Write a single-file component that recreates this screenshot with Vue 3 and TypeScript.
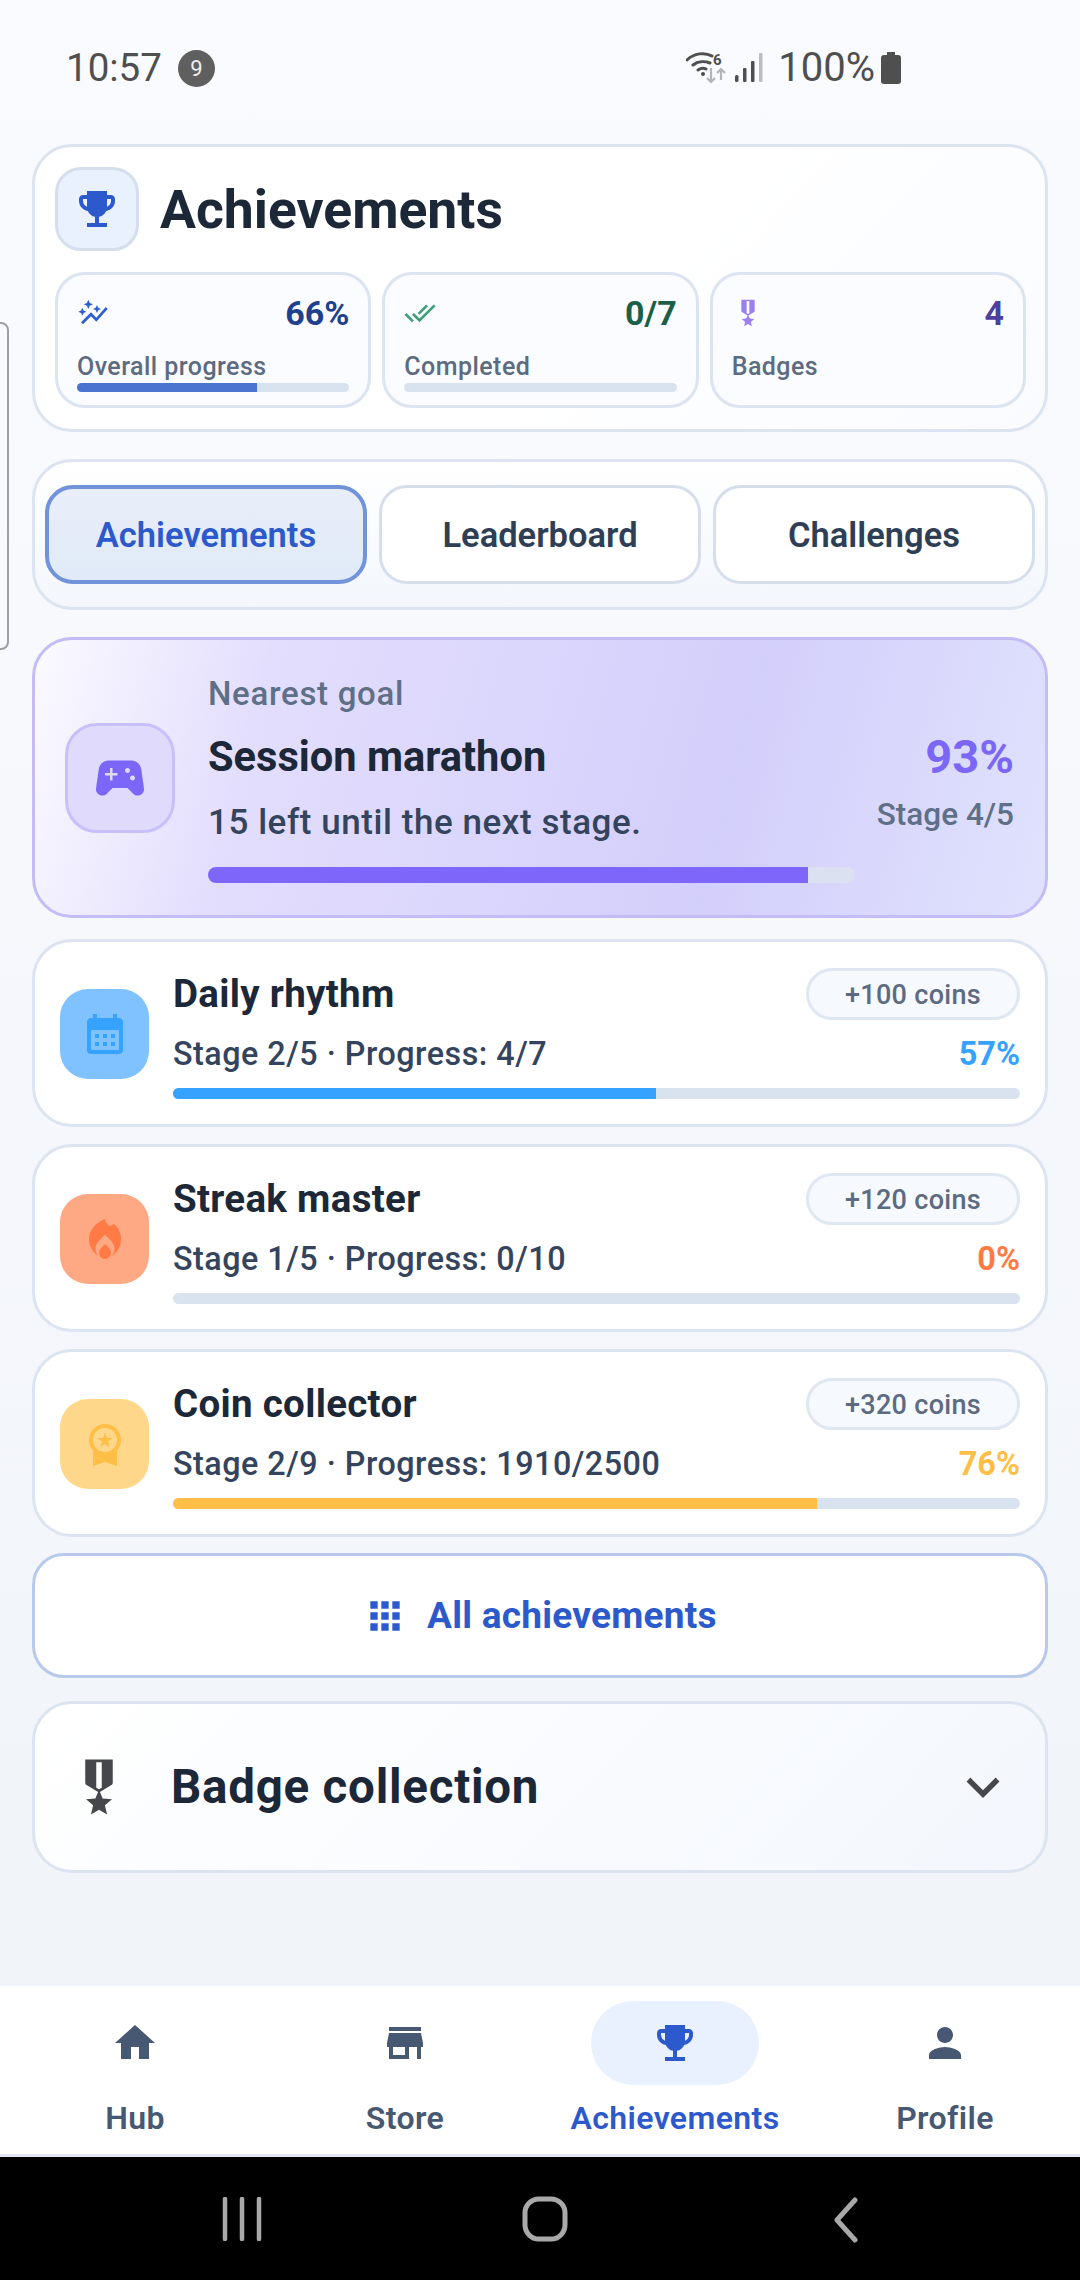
<script setup lang="ts">
const P = {
  trophy: 'M19 5h-2V3H7v2H5c-1.1 0-2 .9-2 2v1c0 2.55 1.92 4.63 4.39 4.94.63 1.5 1.98 2.63 3.61 2.96V19H7v2h10v-2h-4v-3.1c1.63-.33 2.98-1.46 3.61-2.96C19.08 12.63 21 10.55 21 8V7c0-1.1-.9-2-2-2zM5 8V7h2v3.82C5.84 10.4 5 9.3 5 8zm14 0c0 1.3-.84 2.4-2 2.82V7h2v1z',
  graph: 'M14.06 9.94 12 9l2.06-.94L15 6l.94 2.06L18 9l-2.06.94L15 12zM4 14l.94-2.06L7 11l-2.06-.94L4 8l-.94 2.06L1 11l2.06.94zm4.5-5 1.09-2.41L12 5.5 9.59 4.41 8.5 2 7.41 4.41 5 5.5l2.41 1.09zm-4 11.5 6-6.01 4 4L23 8.93l-1.41-1.41-7.09 7.97-4-4L3 19z',
  done: 'M18 7l-1.41-1.41-6.34 6.34 1.41 1.41L18 7zm4.24-1.41L11.66 16.17 7.48 12l-1.41 1.41L11.66 19l12-12-1.42-1.41zM.41 13.41L6 19l1.41-1.41L1.83 12 .41 13.41z',
  medal: 'M17 10.43V2H7v8.43c0 .35.18.68.49.86l4.18 2.51-.99 2.34-3.41.29 2.59 2.24L9.07 22 12 20.23 14.93 22l-.78-3.33 2.59-2.24-3.41-.29-.99-2.34 4.18-2.51c.3-.18.48-.5.48-.86zm-4 1.8-1 .6-1-.6V3h2v9.23z',
  pad: 'M21.58 16.09l-1.09-7.66C20.21 6.46 18.52 5 16.53 5H7.47C5.48 5 3.79 6.46 3.51 8.43l-1.09 7.66C2.2 17.63 3.39 19 4.94 19c.68 0 1.32-.27 1.8-.75L9 16h6l2.25 2.25c.48.48 1.13.75 1.8.75 1.56 0 2.75-1.37 2.53-2.91zM11 11H9v2H8v-2H6v-1h2V8h1v2h2v1zm4-1c-.55 0-1-.45-1-1s.45-1 1-1 1 .45 1 1-.45 1-1 1zm2 3c-.55 0-1-.45-1-1s.45-1 1-1 1 .45 1 1-.45 1-1 1z',
  calendar: 'M19 4h-1V2h-2v2H8V2H6v2H5c-1.11 0-1.99.9-1.99 2L3 20a2 2 0 0 0 2 2h14c1.1 0 2-.9 2-2V6c0-1.1-.9-2-2-2zm0 16H5V10h14v10zM9 14H7v-2h2v2zm4 0h-2v-2h2v2zm4 0h-2v-2h2v2zm-8 4H7v-2h2v2zm4 0h-2v-2h2v2zm4 0h-2v-2h2v2z',
  fire: 'M12 2c.4 2.2 1.5 3.2 2.6 3.4.7.1 1.3-.3 1.6-1 2.3 1.6 3.8 4.5 3.8 7.6 0 3.6-1.9 6.8-4.8 8.6 1-1.1 1.6-2.4 1.6-3.8 0-2.6-2.3-4.3-4.8-7-2.5 2.7-4.8 4.4-4.8 7 0 1.4.6 2.7 1.6 3.8C5.9 18.800 4 15.600 4 12c0-4.400 3.500-8.200 8-10zM12 14.500c1.700 1.800 3 2.800 3 4.300 0 1.700-1.300 3.200-3 3.200s-3-1.500-3-3.200c0-1.500 1.300-2.500 3-4.300z',
  award: 'M9.68 13.69 12 11.93l2.31 1.76-.88-2.85L15.75 9h-2.84L12 6.19 11.09 9H8.25l2.31 1.84-.88 2.85zM20 10c0-4.42-3.58-8-8-8s-8 3.58-8 8c0 2.03.76 3.87 2 5.28V23l6-2 6 2v-7.72c1.24-1.41 2-3.25 2-5.28zm-8-6c3.31 0 6 2.69 6 6s-2.69 6-6 6-6-2.69-6-6 2.69-6 6-6z',
  apps: 'M4 8h4V4H4v4zm6 12h4v-4h-4v4zm-6 0h4v-4H4v4zm0-6h4v-4H4v4zm6 0h4v-4h-4v4zm6-10v4h4V4h-4zm-6 4h4V4h-4v4zm6 6h4v-4h-4v4zm0 6h4v-4h-4v4z',
  chevron: 'M16.59 8.59 12 13.17 7.41 8.59 6 10l6 6 6-6z',
  home: 'M10 20v-6h4v6h5v-8h3L12 3 2 12h3v8z',
  store: 'M20 4H4v2h16V4zm1 10v-2l-1-5H4l-1 5v2h1v6h10v-6h4v6h2v-6h1zm-9 4H6v-4h6v4z',
  person: 'M12 12c2.21 0 4-1.79 4-4s-1.79-4-4-4-4 1.79-4 4 1.79 4 4 4zm0 2c-2.67 0-8 1.34-8 4v2h16v-2c0-2.66-5.33-4-8-4z',
}

const stats = [
  { icon: P.graph, iconColor: '#2f5fcf', value: '66%', valueColor: '#1f3f8f', label: 'Overall progress', fill: 66, fillColor: '#4a74d0', bar: true },
  { icon: P.done, iconColor: '#3f9f78', value: '0/7', valueColor: '#1c5f48', label: 'Completed', fill: 0, fillColor: '#3f9f78', bar: true },
  { icon: P.medal, iconColor: '#9a7ef2', value: '4', valueColor: '#4f3f9f', label: 'Badges', fill: 0, fillColor: '', bar: false },
]

const tabs = [
  { label: 'Achievements', active: true },
  { label: 'Leaderboard', active: false },
  { label: 'Challenges', active: false },
]

const rows = [
  { title: 'Daily rhythm', meta: 'Stage 2/5 · Progress: 4/7', coins: '+100 coins', pct: 57, color: '#36a2ff', tile: '#80c1ff', icon: P.calendar },
  { title: 'Streak master', meta: 'Stage 1/5 · Progress: 0/10', coins: '+120 coins', pct: 0, color: '#ff7a45', tile: '#ffa884', icon: P.fire },
  { title: 'Coin collector', meta: 'Stage 2/9 · Progress: 1910/2500', coins: '+320 coins', pct: 76, color: '#ffbe45', tile: '#ffd78a', icon: P.award },
]

const nav = [
  { label: 'Hub', icon: P.home, active: false },
  { label: 'Store', icon: P.store, active: false },
  { label: 'Achievements', icon: P.trophy, active: true },
  { label: 'Profile', icon: P.person, active: false },
]
</script>

<template>
  <div class="screen">
    <div class="handle"></div>

    <header class="status">
      <div class="status-left">
        <span class="clock">10:57</span>
        <span class="notif">9</span>
      </div>
      <div class="status-right">
        <svg class="sys-wifi" width="40" height="32" viewBox="0 0 40 32">
          <path d="M1 8C8 1 19 0 26 4M7 13c5-4 12-4 17-2M12 18c3-2 6-2 8-1" fill="none" stroke="#4f4f4f" stroke-width="3" stroke-linecap="round" />
          <circle cx="17" cy="22" r="2" fill="#4f4f4f" />
          <text x="27" y="13" class="six">6</text>
          <path d="M25 16v14M21 26l4 4 4-4" fill="none" stroke="#b5b5b5" stroke-width="2.200" />
          <path d="M35 28V17M31 21l4-4 4 4" fill="none" stroke="#b5b5b5" stroke-width="2.200" />
        </svg>
        <svg class="sys-signal" width="29" height="30" viewBox="0 0 29 30">
          <rect x="0" y="22" width="3.500" height="7" rx="1.500" fill="#4f4f4f" />
          <rect x="8" y="15" width="3.500" height="14" rx="1" fill="#4f4f4f" />
          <rect x="16" y="8" width="3.500" height="21" rx="1" fill="#4f4f4f" />
          <rect x="24" y="0" width="3.500" height="29" rx="1" fill="#bdbdbd" />
        </svg>
        <span class="batt-text">100%</span>
        <svg class="sys-batt" width="22" height="32" viewBox="0 0 22 32">
          <path d="M7 0h8v3h3a3 3 0 0 1 3 3v23a3 3 0 0 1-3 3H4a3 3 0 0 1-3-3V6a3 3 0 0 1 3-3h3z" fill="#4f4f4f" />
        </svg>
      </div>
    </header>

    <main class="content">
      <section class="card head-card">
        <div class="head-row">
          <div class="head-icon">
            <svg width="48" height="48" viewBox="0 0 24 24"><path :d="P.trophy" fill="#2c59cb" /></svg>
          </div>
          <h1 class="head-title">Achievements</h1>
        </div>
        <div class="stats">
          <div v-for="s in stats" :key="s.label" class="stat">
            <div class="stat-top">
              <svg width="32" height="32" viewBox="0 0 24 24"><path :d="s.icon" :fill="s.iconColor" /></svg>
              <span class="stat-value" :style="{ color: s.valueColor }">{{ s.value }}</span>
            </div>
            <div class="stat-label">{{ s.label }}</div>
            <div v-if="s.bar" class="stat-bar">
              <div class="stat-fill" :style="{ width: s.fill + '%', background: s.fillColor }"></div>
            </div>
          </div>
        </div>
      </section>

      <nav class="card tabs">
        <button v-for="t in tabs" :key="t.label" class="tab" :class="{ 'tab-active': t.active }">{{ t.label }}</button>
      </nav>

      <section class="goal">
        <div class="goal-icon">
          <svg width="60" height="60" viewBox="0 0 24 24"><path :d="P.pad" fill="#7c66f7" /></svg>
        </div>
        <div class="goal-main">
          <div class="goal-kicker">Nearest goal</div>
          <div class="goal-line">
            <div class="goal-text">
              <div class="goal-title">Session marathon</div>
              <div class="goal-sub">15 left until the next stage.</div>
            </div>
            <div class="goal-side">
              <div class="goal-pct">93%</div>
              <div class="goal-stage">Stage 4/5</div>
            </div>
          </div>
          <div class="goal-bar"><div class="goal-fill"></div></div>
        </div>
      </section>

      <div class="rows">
        <article v-for="r in rows" :key="r.title" class="card row">
          <div class="row-icon" :style="{ background: r.tile }">
            <svg width="48" height="48" viewBox="0 0 24 24"><path :d="r.icon" :fill="r.color" /></svg>
          </div>
          <div class="row-main">
            <div class="row-top">
              <span class="row-title">{{ r.title }}</span>
              <span class="pill">{{ r.coins }}</span>
            </div>
            <div class="row-mid">
              <span class="row-meta">{{ r.meta }}</span>
              <span class="row-pct" :style="{ color: r.color }">{{ r.pct }}%</span>
            </div>
            <div class="row-bar">
              <div class="row-fill" :style="{ width: r.pct + '%', background: r.color }"></div>
            </div>
          </div>
        </article>
      </div>

      <button class="all">
        <svg width="44" height="44" viewBox="0 0 24 24"><path :d="P.apps" fill="#2c59cb" /></svg>
        <span>All achievements</span>
      </button>

      <section class="badge-card">
        <svg class="badge-icon" width="66" height="66" viewBox="0 0 24 24"><path :d="P.medal" fill="#45474c" /></svg>
        <span class="badge-title">Badge collection</span>
        <svg class="badge-chev" width="66" height="66" viewBox="0 0 24 24"><path :d="P.chevron" fill="#45474c" /></svg>
      </section>
    </main>

    <footer class="bottom">
      <a v-for="n in nav" :key="n.label" class="nav-item" :class="{ 'nav-active': n.active }">
        <span class="nav-pill">
          <svg width="48" height="48" viewBox="0 0 24 24"><path :d="n.icon" fill="currentColor" /></svg>
        </span>
        <span class="nav-label">{{ n.label }}</span>
      </a>
    </footer>

    <div class="sysnav">
      <svg width="40" height="44" viewBox="0 0 40 44">
        <path d="M3 2v40M20 2v40M37 2v40" stroke="#a9a9a9" stroke-width="4.500" stroke-linecap="round" fill="none" />
      </svg>
      <svg width="46" height="46" viewBox="0 0 46 46">
        <rect x="3" y="3" width="40" height="40" rx="14" stroke="#a9a9a9" stroke-width="5" fill="none" />
      </svg>
      <svg width="26" height="46" viewBox="0 0 26 46">
        <path d="M22 3 4 23l18 20" stroke="#a9a9a9" stroke-width="5" stroke-linecap="round" stroke-linejoin="round" fill="none" />
      </svg>
    </div>
  </div>
</template>

<style>
html, body { margin: 0; padding: 0; }
</style>

<style scoped>
* { box-sizing: border-box; }
.screen {
  position: relative;
  width: 1080px;
  height: 2280px;
  overflow: hidden;
  display: flex;
  flex-direction: column;
  font-family: Roboto, "Liberation Sans", sans-serif;
  color: #1c2738;
  background: linear-gradient(180deg, #fafbff 0%, #eff3f8 100%);
}
.handle {
  position: absolute;
  left: -10px;
  top: 322px;
  width: 19px;
  height: 328px;
  border: 2px solid #9aa0a8;
  border-radius: 8px;
}
.status {
  height: 144px;
  flex: none;
  display: flex;
  justify-content: space-between;
  padding: 46px 0 0 66px;
}
.status-left, .status-right { display: flex; align-items: center; height: 44px; }
.status-left { gap: 16px; }
.clock { font-size: 38.500px; color: #4f4f4f; line-height: 44px; }
.batt-text { font-size: 40px; color: #4f4f4f; line-height: 44px; }
.notif {
  width: 37px;
  height: 37px;
  border-radius: 50%;
  background: #5f5f5f;
  color: #eee;
  font-size: 22px;
  display: flex;
  align-items: center;
  justify-content: center;
}
.status-right { margin-right: 178px; }
.sys-wifi { margin-right: 9px; }
.sys-signal { margin-right: 14px; }
.batt-text { margin-right: 5px; }
.six { font: 700 15px Roboto, sans-serif; fill: #4f4f4f; }
.content {
  flex: 1;
  display: flex;
  flex-direction: column;
  padding: 0 32px;
}
.card {
  background: #fff;
  border: 3px solid #dbe4f0;
  border-radius: 40px;
}
.head-card {
  height: 288px;
  padding: 20px 19px 0 20px;
  background: linear-gradient(135deg, #fff 55%, #f9fbff 100%);
}
.head-row { display: flex; align-items: center; gap: 21px; }
.head-icon {
  width: 84px;
  height: 84px;
  border-radius: 26px;
  background: #e9f1ff;
  border: 3px solid #d5deed;
  display: flex;
  align-items: center;
  justify-content: center;
}
.head-title { margin: 2px 0 0; font-size: 53.500px; font-weight: 700; line-height: 64px; color: #1c2738; }
.stats { margin-top: 21px; display: grid; grid-template-columns: repeat(3, 1fr); gap: 11px; }
.stat {
  height: 136px;
  padding: 20px 19px 0 19px;
  background: #fafcff;
  border: 3px solid #dbe4f0;
  border-radius: 30px;
}
.stat-top { display: flex; justify-content: space-between; align-items: center; height: 36px; }
.stat-value { font-size: 34px; font-weight: 700; }
.stat-label { margin-top: 20px; font-size: 25px; letter-spacing: .45px; font-weight: 500; color: #5d6b80; line-height: 32px; }
.stat-bar { height: 9px; border-radius: 5px; background: #d9e2ef; overflow: hidden; }
.stat-fill { height: 100%; }
.tabs {
  margin-top: 27px;
  height: 151px;
  padding: 23px 10px;
  display: grid;
  grid-template-columns: repeat(3, 1fr);
  gap: 12px;
  background: linear-gradient(180deg, #fff 0%, #f3f7fd 100%);
}
.tab {
  font: 600 34.500px Roboto, sans-serif;
  color: #2e3e55;
  background: #fff;
  border: 3px solid #d5deed;
  border-radius: 28px;
  padding: 0;
}
.tab-active {
  color: #2c59cb;
  border: 4px solid #7093da;
  background: linear-gradient(180deg, #e9eef9 0%, #e0eaf8 100%);
}
.goal {
  margin-top: 27px;
  height: 281px;
  display: flex;
  align-items: center;
  gap: 33px;
  padding: 0 31px 0 30px;
  border: 3px solid #c4bcf6;
  border-radius: 40px;
  background: linear-gradient(105deg, #fbfaff 0%, #e3defd 22%, #d3cffb 68%, #e0e2fd 100%);
}
.goal-icon {
  flex: none;
  width: 110px;
  height: 110px;
  border-radius: 32px;
  background: #e0dbfd;
  border: 3px solid #c8c0fa;
  display: flex;
  align-items: center;
  justify-content: center;
}
.goal-main { flex: 1; min-width: 0; }
.goal-kicker { font-size: 33px; letter-spacing: .7px; font-weight: 500; line-height: 40px; margin-top: 1px; color: #5f6f88; }
.goal-line { display: flex; justify-content: space-between; align-items: center; margin-top: 18px; }
.goal-title { font-size: 41.600px; font-weight: 700; line-height: 50px; color: #1c2738; }
.goal-sub { margin-top: 21px; font-size: 35px; letter-spacing: .55px; font-weight: 500; line-height: 40px; color: #34445c; }
.goal-side { text-align: right; margin-top: -11px; }
.goal-pct { font-size: 47px; font-weight: 700; line-height: 52px; color: #7b66f6; }
.goal-stage { margin-top: 14px; font-size: 31.500px; font-weight: 500; line-height: 36px; color: #5f6f88; }
.goal-bar { margin-top: 24px; width: 647px; height: 16px; border-radius: 8px; background: #dbe1f1; overflow: hidden; }
.goal-fill { width: 92.700%; height: 100%; background: #7e66fb; }
.rows { margin-top: 21px; display: flex; flex-direction: column; gap: 17px; }
.row {
  height: 188px;
  display: flex;
  align-items: center;
  gap: 24px;
  padding: 0 25px 0 25px;
}
.row-icon {
  flex: none;
  width: 89px;
  height: 90px;
  border-radius: 28px;
  display: flex;
  align-items: center;
  justify-content: center;
  margin-top: 2px;
}
.row-main { flex: 1; min-width: 0; position: relative; top: 1px; }
.row-top { display: flex; justify-content: space-between; align-items: center; height: 52px; }
.row-title { font-size: 38.500px; letter-spacing: .3px; font-weight: 700; color: #1c2738; position: relative; top: -2px; }
.pill {
  width: 214px;
  height: 52px;
  padding-top: 3px;
  border-radius: 26px;
  background: #f6f9fe;
  border: 3px solid #dfe7f3;
  font-size: 27px;
  letter-spacing: .3px;
  font-weight: 500;
  color: #5d6b80;
  display: flex;
  align-items: center;
  justify-content: center;
  position: relative;
  top: -2px;
}
.row-mid { display: flex; justify-content: space-between; align-items: center; margin-top: 14px; line-height: 36px; }
.row-meta { font-size: 32.300px; letter-spacing: .5px; font-weight: 500; color: #34445c; }
.row-pct { font-size: 32.500px; font-weight: 700; }
.row-bar { height: 11px; margin-top: 16px; border-radius: 6px; background: #d9e2ef; overflow: hidden; }
.row-fill { height: 100%; }
.all {
  margin-top: 16px;
  height: 125px;
  flex: none;
  display: flex;
  align-items: center;
  justify-content: center;
  gap: 20px;
  background: #fff;
  border: 3px solid #b8caeb;
  border-radius: 32px;
  font: 700 37px Roboto, sans-serif;
  letter-spacing: .25px;
  color: #2c59cb;
  padding: 0;
}
.badge-card {
  margin-top: 23px;
  height: 172px;
  display: flex;
  align-items: center;
  padding: 0 29px 0 31px;
  border: 3px solid #dbe4f0;
  border-radius: 40px;
  background: linear-gradient(135deg, #fff 0%, #f3f7fd 100%);
}
.badge-title { margin-left: 39px; font-size: 47.500px; letter-spacing: .75px; font-weight: 700; color: #1c2738; flex: 1; }
.bottom {
  flex: none;
  height: 171px;
  display: grid;
  grid-template-columns: repeat(4, 1fr);
  background: #fff;
  border-bottom: 3px solid #e1e7f3;
}
.nav-item {
  display: flex;
  flex-direction: column;
  align-items: center;
  padding-top: 15px;
  color: #465872;
}
.nav-pill {
  width: 168px;
  height: 84px;
  border-radius: 42px;
  display: flex;
  align-items: center;
  justify-content: center;
}
.nav-label { margin-top: 14px; font-size: 32px; letter-spacing: .4px; font-weight: 600; line-height: 38px; }
.nav-active { color: #2c59cb; }
.nav-active .nav-pill { background: #e9f1ff; }
.sysnav {
  flex: none;
  height: 123px;
  background: #000;
  display: flex;
  align-items: flex-start;
  padding-top: 40px;
  padding-left: 222px;
}
.sysnav svg:nth-child(2) { margin-left: 260px; margin-top: -1px; }
.sysnav svg:nth-child(3) { margin-left: 265px; }
</style>
